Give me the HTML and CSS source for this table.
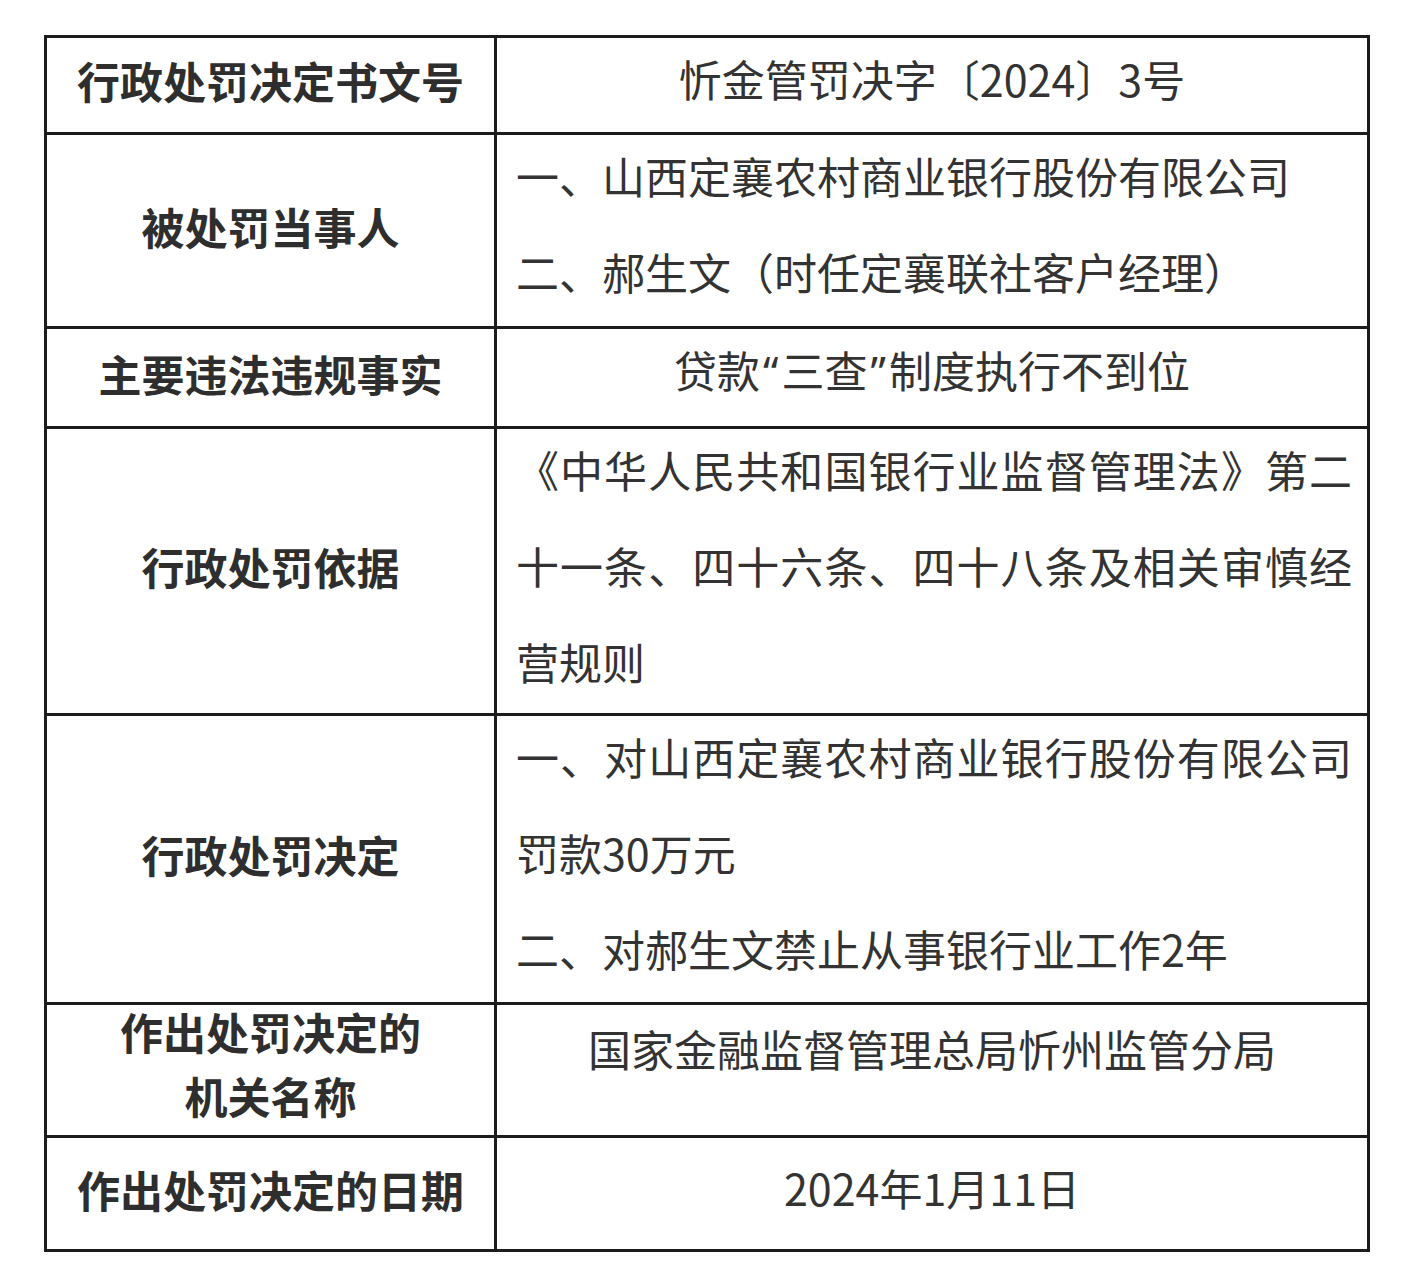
FILE: index.html
```html
<!DOCTYPE html>
<html lang="zh-CN">
<head>
<meta charset="utf-8">
<title>行政处罚信息</title>
<link rel="stylesheet" href="styles.css">
</head>
<body>
<div class="page">
  <table class="penalty">
    <colgroup>
      <col class="col-label">
      <col class="col-value">
    </colgroup>
    <tbody>
      <tr class="row-docno">
        <th class="label">行政处罚决定书文号</th>
        <td class="value single">忻金管罚决字〔2024〕3号</td>
      </tr>
      <tr class="row-party">
        <th class="label">被处罚当事人</th>
        <td class="value multi"><div class="text"><p class="line">一、山西定襄农村商业银行股份有限公司</p><p class="line">二、郝生文（时任定襄联社客户经理）</p></div></td>
      </tr>
      <tr class="row-fact">
        <th class="label">主要违法违规事实</th>
        <td class="value single">贷款<span class="quote">“</span>三查<span class="quote">”</span>制度执行不到位</td>
      </tr>
      <tr class="row-basis">
        <th class="label">行政处罚依据</th>
        <td class="value multi"><div class="text justify">《中华人民共和国银行业监督管理法》第二十一条、四十六条、四十八条及相关审慎经营规则</div></td>
      </tr>
      <tr class="row-decision">
        <th class="label">行政处罚决定</th>
        <td class="value multi"><div class="text"><p class="line justify">一、对山西定襄农村商业银行股份有限公司罚款30万元</p><p class="line">二、对郝生文禁止从事银行业工作2年</p></div></td>
      </tr>
      <tr class="row-org">
        <th class="label two-line"><div class="label-text">作出处罚决定的<br>机关名称</div></th>
        <td class="value single raised">国家金融监督管理总局忻州监管分局</td>
      </tr>
      <tr class="row-date">
        <th class="label">作出处罚决定的日期</th>
        <td class="value single">2024年1月11日</td>
      </tr>
    </tbody>
  </table>
</div>
</body>
</html>
```

FILE: styles.css
```css
html, body {
  margin: 0;
  padding: 0;
  background: #ffffff;
}

.page {
  padding: 35px 0 0 44px;
}

.penalty {
  border-collapse: collapse;
  table-layout: fixed;
  width: 1326px;
  font-family: "Noto Sans CJK SC", "Noto Sans", sans-serif;
  font-size: 43px;
  color: #333333;
}

.col-label {
  width: 450px;
}

.penalty th,
.penalty td {
  border: 3px solid #1c1c1c;
  padding: 0;
}

.penalty th.label {
  font-weight: 700;
  text-align: center;
  vertical-align: middle;
  line-height: 64px;
  padding-bottom: 10px;
  color: #2e2e2e;
}

.penalty th.two-line {
  padding-bottom: 0;
}

.label-text {
  margin-top: -14px;
}

.penalty td.value {
  font-weight: 400;
}

.penalty td.single {
  text-align: center;
  vertical-align: middle;
  line-height: 50px;
  padding-bottom: 14px;
}

.penalty td.single.raised {
  padding-bottom: 44px;
}

.penalty td.multi {
  vertical-align: top;
  text-align: left;
  line-height: 96px;
  padding: 0 15px 0 19px;
}

.text {
  margin-top: -8px;
}

.line {
  margin: 0;
}

.justify {
  text-align: justify;
}

.quote {
  font-family: "Noto Sans", sans-serif;
  padding: 0 3px;
}

.row-docno { height: 97px; }
.row-party { height: 194px; }
.row-fact { height: 100px; }
.row-basis { height: 287px; }
.row-decision { height: 289px; }
.row-org { height: 133px; }
.row-date { height: 114px; }
```
